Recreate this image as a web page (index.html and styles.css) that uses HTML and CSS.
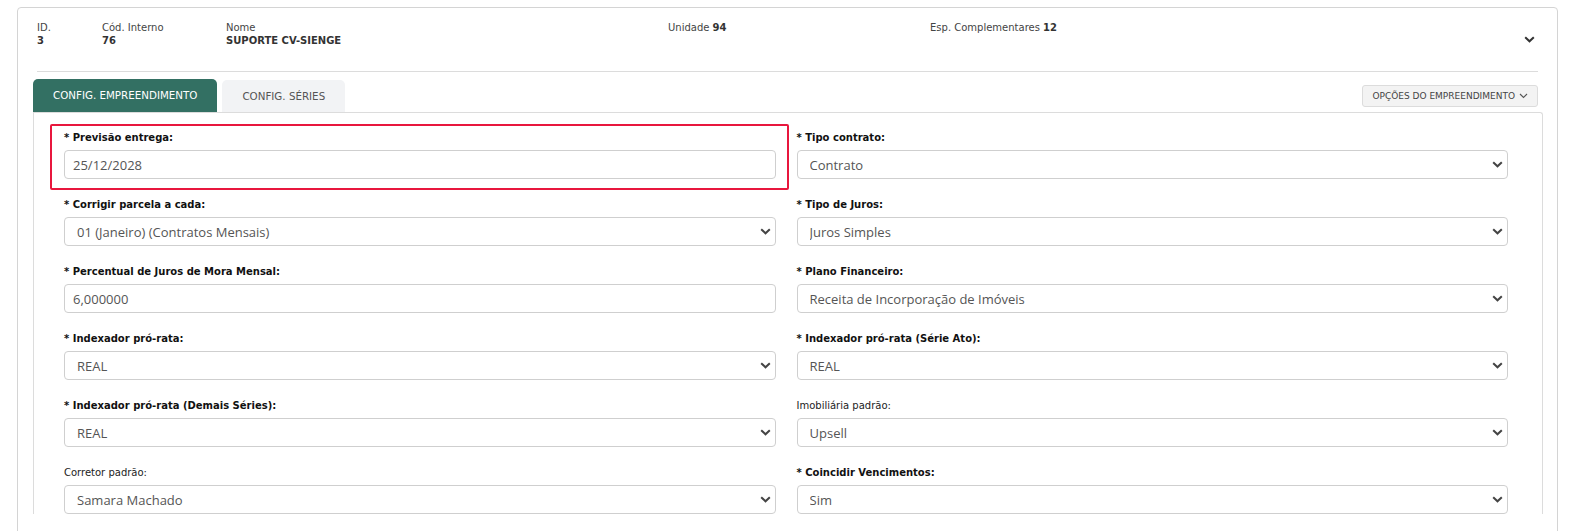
FILE: index.html
```html
<!DOCTYPE html>
<html lang="pt-BR">
<head>
    <meta charset="UTF-8">
    <meta name="viewport" content="width=device-width, initial-scale=1.0">
    <title>Empreendimento</title>
    <link rel="stylesheet" href="styles.css">
</head>
<body>
    <div class="emp-card">
        <div class="emp-header">
            <div class="info info-id"><span class="info-label">ID.</span><b>3</b></div>
            <div class="info info-cod"><span class="info-label">Cód. Interno</span><b>76</b></div>
            <div class="info info-nome"><span class="info-label">Nome</span><b>SUPORTE CV-SIENGE</b></div>
            <div class="info info-unidade">Unidade <b>94</b></div>
            <div class="info info-esp">Esp. Complementares <b>12</b></div>
            <svg class="header-toggle" width="11" height="7" viewBox="0 0 11 7">
                <path d="M1.2 1.2 L5.5 5.3 L9.8 1.2" fill="none" stroke="#333" stroke-width="2"/>
            </svg>
        </div>

        <div class="emp-body">
            <div class="tabs">
                <div class="tab active">CONFIG. EMPREENDIMENTO</div>
                <div class="tab">CONFIG. SÉRIES</div>
                <button class="btn-options">OPÇÕES DO EMPREENDIMENTO
                    <svg width="9" height="6" viewBox="0 0 9 6"><path d="M1 1 L4.5 4.5 L8 1" fill="none" stroke="#555" stroke-width="1.1"/></svg>
                </button>
            </div>

            <div class="tab-panel">
                <div class="form-grid">
                    <div class="field highlight">
                        <label class="req">* Previsão entrega:</label>
                        <input class="control" type="text" value="25/12/2028">
                    </div>
                    <div class="field">
                        <label class="req">* Tipo contrato:</label>
                        <div class="select-wrap">
                            <select class="control"><option>Contrato</option></select>
                            <svg class="caret" width="11" height="7" viewBox="0 0 11 7"><path d="M1.2 1.2 L5.5 5.3 L9.8 1.2" fill="none" stroke="#444" stroke-width="2"/></svg>
                        </div>
                    </div>

                    <div class="field">
                        <label class="req">* Corrigir parcela a cada:</label>
                        <div class="select-wrap">
                            <select class="control"><option>01 (Janeiro) (Contratos Mensais)</option></select>
                            <svg class="caret" width="11" height="7" viewBox="0 0 11 7"><path d="M1.2 1.2 L5.5 5.3 L9.8 1.2" fill="none" stroke="#444" stroke-width="2"/></svg>
                        </div>
                    </div>
                    <div class="field">
                        <label class="req">* Tipo de Juros:</label>
                        <div class="select-wrap">
                            <select class="control"><option>Juros Simples</option></select>
                            <svg class="caret" width="11" height="7" viewBox="0 0 11 7"><path d="M1.2 1.2 L5.5 5.3 L9.8 1.2" fill="none" stroke="#444" stroke-width="2"/></svg>
                        </div>
                    </div>

                    <div class="field">
                        <label class="req">* Percentual de Juros de Mora Mensal:</label>
                        <input class="control" type="text" value="6,000000">
                    </div>
                    <div class="field">
                        <label class="req">* Plano Financeiro:</label>
                        <div class="select-wrap">
                            <select class="control"><option>Receita de Incorporação de Imóveis</option></select>
                            <svg class="caret" width="11" height="7" viewBox="0 0 11 7"><path d="M1.2 1.2 L5.5 5.3 L9.8 1.2" fill="none" stroke="#444" stroke-width="2"/></svg>
                        </div>
                    </div>

                    <div class="field">
                        <label class="req">* Indexador pró-rata:</label>
                        <div class="select-wrap">
                            <select class="control"><option>REAL</option></select>
                            <svg class="caret" width="11" height="7" viewBox="0 0 11 7"><path d="M1.2 1.2 L5.5 5.3 L9.8 1.2" fill="none" stroke="#444" stroke-width="2"/></svg>
                        </div>
                    </div>
                    <div class="field">
                        <label class="req">* Indexador pró-rata (Série Ato):</label>
                        <div class="select-wrap">
                            <select class="control"><option>REAL</option></select>
                            <svg class="caret" width="11" height="7" viewBox="0 0 11 7"><path d="M1.2 1.2 L5.5 5.3 L9.8 1.2" fill="none" stroke="#444" stroke-width="2"/></svg>
                        </div>
                    </div>

                    <div class="field">
                        <label class="req">* Indexador pró-rata (Demais Séries):</label>
                        <div class="select-wrap">
                            <select class="control"><option>REAL</option></select>
                            <svg class="caret" width="11" height="7" viewBox="0 0 11 7"><path d="M1.2 1.2 L5.5 5.3 L9.8 1.2" fill="none" stroke="#444" stroke-width="2"/></svg>
                        </div>
                    </div>
                    <div class="field">
                        <label>Imobiliária padrão:</label>
                        <div class="select-wrap">
                            <select class="control"><option>Upsell</option></select>
                            <svg class="caret" width="11" height="7" viewBox="0 0 11 7"><path d="M1.2 1.2 L5.5 5.3 L9.8 1.2" fill="none" stroke="#444" stroke-width="2"/></svg>
                        </div>
                    </div>

                    <div class="field">
                        <label>Corretor padrão:</label>
                        <div class="select-wrap">
                            <select class="control"><option>Samara Machado</option></select>
                            <svg class="caret" width="11" height="7" viewBox="0 0 11 7"><path d="M1.2 1.2 L5.5 5.3 L9.8 1.2" fill="none" stroke="#444" stroke-width="2"/></svg>
                        </div>
                    </div>
                    <div class="field">
                        <label class="req">* Coincidir Vencimentos:</label>
                        <div class="select-wrap">
                            <select class="control"><option>Sim</option></select>
                            <svg class="caret" width="11" height="7" viewBox="0 0 11 7"><path d="M1.2 1.2 L5.5 5.3 L9.8 1.2" fill="none" stroke="#444" stroke-width="2"/></svg>
                        </div>
                    </div>
                </div>
            </div>
        </div>
    </div>
</body>
</html>
```

FILE: styles.css
```css
body {
    margin: 0;
    background: #fff;
    font-family: "DejaVu Sans", Verdana, sans-serif;
    color: #333;
    overflow: hidden;
}
.emp-card {
    width: 1539px;
    margin: 7px 0 0 17px;
    border: 1px solid #d4d4d4;
    border-radius: 4px;
    height: 600px;
}
.emp-header {
    display: flex;
    margin: 0 19px;
    padding: 13px 0 24px 0;
    border-bottom: 1px solid #dcdcdc;
    font-size: 10px;
    line-height: 13px;
    color: #444;
}
.info {
    display: flex;
    flex-direction: column;
}
.info b {
    color: #333;
}
.info-id { width: 65px; }
.info-cod { width: 124px; }
.info-nome { width: 442px; }
.info-unidade { width: 262px; display: block; }
.info-esp { display: block; }
.header-toggle {
    margin-left: auto;
    margin-top: 15px;
    margin-right: 3px;
}
.emp-body {
    padding: 7px 14px 0 15px;
}
.tabs {
    display: flex;
    align-items: flex-end;
    gap: 5px;
}
.tab {
    height: 32px;
    line-height: 33px;
    padding: 0 20px;
    font-size: 10.3px;
    color: #555;
    background: #f2f3f5;
    border-radius: 5px 5px 0 0;
}
.tab.active {
    height: 33px;
    background: #337063;
    color: #fff;
}
.btn-options {
    margin-left: auto;
    margin-right: 5px;
    margin-bottom: 5px;
    height: 22px;
    padding: 0 9px 0 9px;
    font-family: "DejaVu Sans", Verdana, sans-serif;
    font-size: 9px;
    color: #444;
    background: #f3f3f3;
    border: 1px solid #dcdcdc;
    border-radius: 3px;
    display: flex;
    align-items: center;
    gap: 4px;
}
.tab-panel {
    border: 1px solid #dcdcdc;
    border-bottom: none;
    border-radius: 0 3px 0 0;
    padding: 18px 34px 0 30px;
}
.form-grid {
    display: grid;
    grid-template-columns: 1fr 1fr;
    column-gap: 21px;
    row-gap: 19px;
}
.field {
    display: flex;
    flex-direction: column;
    position: relative;
}
.field label {
    font-size: 10px;
    line-height: 14px;
    margin-bottom: 5px;
    color: #222;
}
.field label.req {
    font-weight: bold;
    color: #111;
}
.field.highlight::after {
    content: "";
    position: absolute;
    top: -7px;
    left: -14px;
    right: -13px;
    bottom: -11px;
    border: 2px solid #e8173d;
    border-radius: 2px;
    pointer-events: none;
}
.control {
    box-sizing: border-box;
    width: 100%;
    height: 29px;
    border: 1px solid #cfcfcf;
    border-radius: 4px;
    background: #fff;
    font-family: "Open Sans", sans-serif;
    font-size: 13px;
    color: #555;
    padding: 0 8px;
    outline: none;
}
select.control {
    appearance: none;
    -webkit-appearance: none;
    padding-left: 12px;
}
.select-wrap {
    position: relative;
}
.caret {
    position: absolute;
    right: 5px;
    top: 11px;
    pointer-events: none;
}
```
